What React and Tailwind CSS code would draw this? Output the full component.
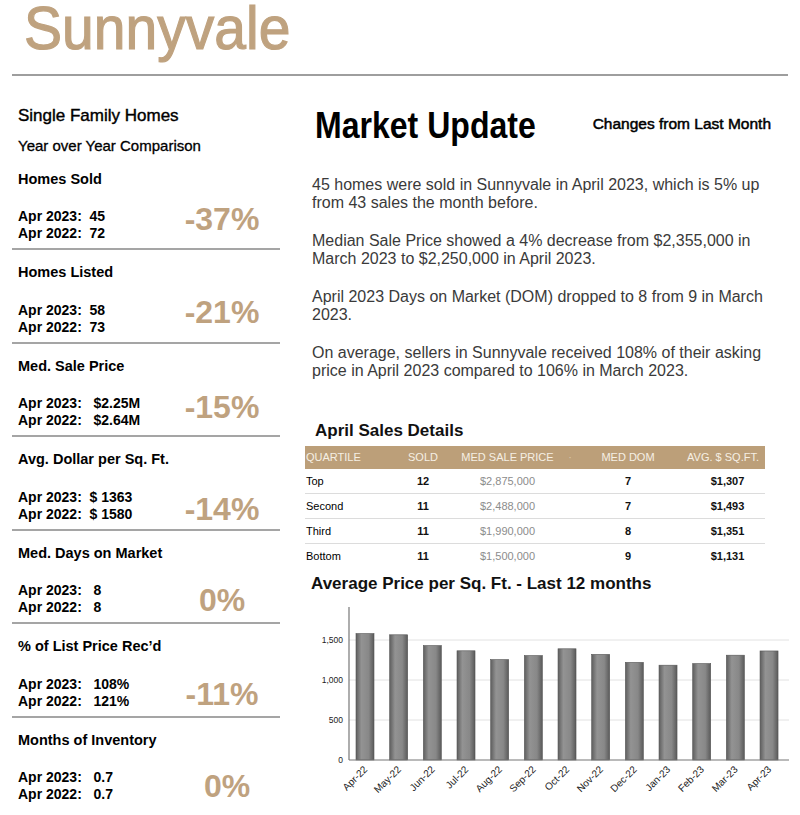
import React from 'react';

const stats = [
  { title: 'Homes Sold', a: 'Apr 2023:  45', b: 'Apr 2022:  72', pct: '-37%', shift: '-translate-y-[6px]' },
  { title: 'Homes Listed', a: 'Apr 2023:  58', b: 'Apr 2022:  73', pct: '-21%', shift: '-translate-y-[7px]' },
  { title: 'Med. Sale Price', a: 'Apr 2023:   $2.25M', b: 'Apr 2022:   $2.64M', pct: '-15%', shift: '-translate-y-[5px]' },
  { title: 'Avg. Dollar per Sq. Ft.', a: 'Apr 2023:  $ 1363', b: 'Apr 2022:  $ 1580', pct: '-14%', shift: 'translate-y-[3px]' },
  { title: 'Med. Days on Market', a: 'Apr 2023:   8', b: 'Apr 2022:   8', pct: '0%', shift: 'translate-y-[1px]' },
  { title: '% of List Price Rec\u2019d', a: 'Apr 2023:   108%', b: 'Apr 2022:   121%', pct: '-11%', shift: 'translate-y-[1px]' },
  { title: 'Months of Inventory', a: 'Apr 2023:   0.7', b: 'Apr 2022:   0.7', pct: '0%', shift: 'translate-x-[5px]', last: true },
];

const quartiles = [
  { q: 'Top', sold: 12, price: '$2,875,000', dom: 7, sqft: '$1,307' },
  { q: 'Second', sold: 11, price: '$2,488,000', dom: 7, sqft: '$1,493' },
  { q: 'Third', sold: 11, price: '$1,990,000', dom: 8, sqft: '$1,351' },
  { q: 'Bottom', sold: 11, price: '$1,500,000', dom: 9, sqft: '$1,131' },
];

const months = [
  ['Apr-22', 1580], ['May-22', 1565], ['Jun-22', 1430], ['Jul-22', 1365],
  ['Aug-22', 1255], ['Sep-22', 1305], ['Oct-22', 1390], ['Nov-22', 1320],
  ['Dec-22', 1220], ['Jan-23', 1185], ['Feb-23', 1205], ['Mar-23', 1310],
  ['Apr-23', 1363],
];

const StatBlock = ({ s }) => (
  <div className={`h-[93.5px] pl-[6px] pt-[14px] ${s.last ? '' : 'border-b-2 border-[#a5a5a5]'}`}>
    <div className="text-[14.5px] leading-[16px] font-bold text-black">{s.title}</div>
    <div className="flex items-center mt-[21.5px]">
      <div className="w-[154px] text-[14px] leading-[17px] font-bold text-black whitespace-pre">
        <div>{s.a}</div>
        <div>{s.b}</div>
      </div>
      <div className={`w-[100px] text-center text-[32px] leading-[34px] font-bold text-[#bfa27f] ${s.shift}`}>
        {s.pct}
      </div>
    </div>
  </div>
);

const Chart = () => {
  const zeroY = 160;
  const k = 0.08;
  const x0 = 51;
  const pitch = 33.67;
  return (
    <svg width="487" height="215" className="block mt-[6px]" style={{ fontFamily: '"Liberation Sans", Arial, sans-serif' }}>
      <defs>
        <linearGradient id="bar" x1="0" x2="1" y1="0" y2="0">
          <stop offset="0" stopColor="#5e5e5e" />
          <stop offset="0.3" stopColor="#939393" />
          <stop offset="0.7" stopColor="#888" />
          <stop offset="1" stopColor="#5a5a5a" />
        </linearGradient>
      </defs>
      {[500, 1000, 1500].map((v) => (
        <line key={v} x1="44" x2="484" y1={zeroY - v * k} y2={zeroY - v * k} stroke="#e2e2e2" strokeWidth="1" />
      ))}
      {[0, 500, 1000, 1500].map((v) => (
        <text key={v} x="38" y={zeroY - v * k + 3} textAnchor="end" fontSize="8.5" fill="#222">
          {v.toLocaleString('en-US')}
        </text>
      ))}
      {months.map(([m, v], i) => {
        const x = x0 + i * pitch;
        const h = v * k;
        const ax = x + 12;
        const ay = zeroY + 10;
        return (
          <g key={m}>
            <rect x={x} y={zeroY - h} width="18" height={h} fill="url(#bar)" stroke="#555" strokeWidth="0.6" />
            <text x={ax} y={ay} textAnchor="end" fontSize="10" fill="#222" transform={`rotate(-45 ${ax} ${ay})`}>
              {m}
            </text>
          </g>
        );
      })}
      <line x1="44" x2="44" y1="7" y2={zeroY} stroke="#777" strokeWidth="1.2" />
      <line x1="44" x2="484" y1={zeroY} y2={zeroY} stroke="#777" strokeWidth="1.2" />
    </svg>
  );
};

export default function App() {
  return (
    <div className="w-[800px] h-[815px] bg-white overflow-hidden relative" style={{ fontFamily: '"Liberation Sans", Arial, sans-serif' }}>
      {/* Header */}
      <div className="h-[74px] pl-[24px]">
        <div className="inline-block origin-left scale-x-[0.92] text-[62px] leading-[56px] text-[#bfa27f] [-webkit-text-stroke:1.2px_#bfa27f]">
          Sunnyvale
        </div>
      </div>
      <div className="mx-[12px] h-[2px] bg-[#9e9e9e]" />

      <div className="flex pl-[12px]">
        {/* Left column */}
        <div className="w-[268px]">
          <div className="pt-[31px] pl-[6px] text-[17px] leading-[18px] text-black [-webkit-text-stroke:0.4px_#000]">Single Family Homes</div>
          <div className="mt-[12px] pl-[6px] text-[15px] leading-[18px] text-black [-webkit-text-stroke:0.3px_#000]">Year over Year Comparison</div>
          <div className="mt-[1.5px]">
            {stats.map((s) => (
              <StatBlock key={s.title} s={s} />
            ))}
          </div>
        </div>

        {/* Right column */}
        <div className="ml-[25px] w-[487px]">
          <div className="flex justify-between">
            <div className="mt-[30px] pl-[10px] text-[36px] leading-[40px] font-bold text-black">
              <span className="inline-block origin-left scale-x-[0.89]">Market Update</span>
            </div>
            <div className="mt-[38px] pr-[21px] text-[15.5px] leading-[20px] text-black [-webkit-text-stroke:0.5px_#000]">Changes from Last Month</div>
          </div>

          <div className="mt-[30px] pl-[7px] w-[479px] text-[16px] leading-[18px] text-[#3a3a3a] space-y-[20px]">
            <p>45 homes were sold in Sunnyvale in April 2023, which is 5% up from 43 sales the month before.</p>
            <p>Median Sale Price showed a 4% decrease from $2,355,000 in March 2023 to $2,250,000 in April 2023.</p>
            <p>April 2023 Days on Market (DOM) dropped to 8 from 9 in March 2023.</p>
            <p>On average, sellers in Sunnyvale received 108% of their asking price in April 2023 compared to 106% in March 2023.</p>
          </div>

          <div className="mt-[41px] pl-[10px] text-[17px] leading-[20px] font-bold text-[#111]">April Sales Details</div>

          <div className="mt-[5px] w-[460px] text-[11px]">
            <div className="flex items-center h-[23px] bg-[#bc9f79] text-[#f6efe4]">
              <div className="w-[86px] pl-[1px]">QUARTILE</div>
              <div className="w-[64px] text-center">SOLD</div>
              <div className="w-[105px] text-center">MED SALE PRICE</div>
              <div className="w-[20px] text-center text-[#d9c6ad]">·</div>
              <div className="w-[96px] text-center">MED DOM</div>
              <div className="w-[89px] text-right pr-[6px]">AVG. $ SQ.FT.</div>
            </div>
            {quartiles.map((r, i) => (
              <div key={r.q} className={`flex items-center h-[25px] ${i < 3 ? 'border-b-[1.5px] border-[#dcdcdc]' : ''}`}>
                <div className="w-[86px] pl-[1px] text-black">{r.q}</div>
                <div className="w-[64px] text-center font-bold text-[#111]">{r.sold}</div>
                <div className="w-[105px] text-center text-[#8c8c8c]">{r.price}</div>
                <div className="w-[20px]" />
                <div className="w-[96px] text-center font-bold text-[#111]">{r.dom}</div>
                <div className="w-[89px] text-center pl-[14px] font-bold text-[#111]">{r.sqft}</div>
              </div>
            ))}
          </div>

          <div className="mt-[5px] pl-[6px] text-[17px] leading-[20px] font-bold text-[#111]">Average Price per Sq. Ft. - Last 12 months</div>
          <Chart />
        </div>
      </div>
    </div>
  );
}
